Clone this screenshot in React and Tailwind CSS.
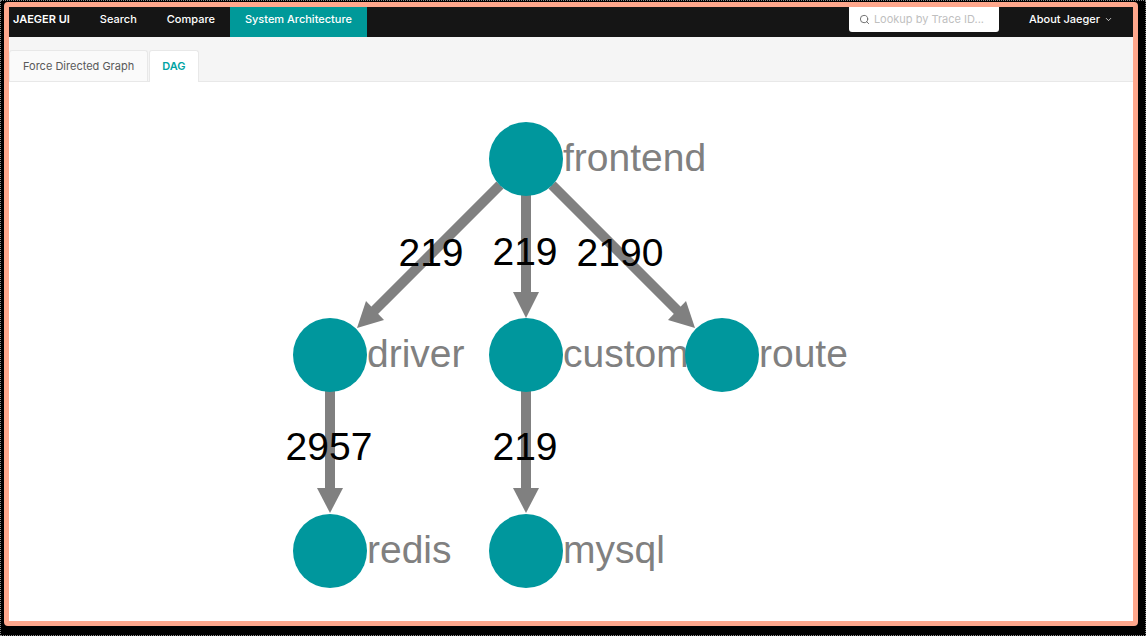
import { Search, ChevronDown } from "lucide-react";

const NODES = [
  { name: "frontend", x: 517, y: 77 },
  { name: "driver", x: 321, y: 273 },
  { name: "customer", x: 517, y: 273 },
  { name: "route", x: 713, y: 273 },
  { name: "redis", x: 321, y: 469 },
  { name: "mysql", x: 517, y: 469 },
];

const EDGES = [
  { x1: 491, y1: 103, x2: 365, y2: 229, tip: "348,246 357,219 375,238", label: "219", lx: 422, ly: 184 },
  { x1: 517, y1: 110, x2: 517, y2: 212, tip: "517,236 504,210 530,210", label: "219", lx: 516, ly: 183 },
  { x1: 543, y1: 103, x2: 669, y2: 229, tip: "686,246 677,219 659,238", label: "2190", lx: 611, ly: 184 },
  { x1: 321, y1: 305, x2: 321, y2: 408, tip: "321,431 308,406 334,406", label: "2957", lx: 320, ly: 378 },
  { x1: 517, y1: 305, x2: 517, y2: 408, tip: "517,431 504,406 530,406", label: "219", lx: 516, ly: 378 },
];

function Graph() {
  return (
    <svg viewBox="0 0 1124 539" className="block h-auto w-full" role="img" aria-label="Service dependencies">
      {EDGES.map((e) => (
        <g key={e.tip}>
          <line x1={e.x1} y1={e.y1} x2={e.x2} y2={e.y2} stroke="#808080" strokeWidth="10" />
          <polygon points={e.tip} fill="#808080" />
        </g>
      ))}
      {NODES.map((n) => (
        <g key={n.name}>
          <circle cx={n.x} cy={n.y} r="37" fill="#00979d" />
          <text x={n.x + 37} y={n.y + 12} className="fill-[#808080] font-['Liberation_Sans',sans-serif] text-[39px]">
            {n.name}
          </text>
        </g>
      ))}
      {EDGES.map((e) => (
        <text
          key={e.tip}
          x={e.lx}
          y={e.ly}
          textAnchor="middle"
          className="fill-black font-['Liberation_Sans',sans-serif] text-[39px]"
        >
          {e.label}
        </text>
      ))}
    </svg>
  );
}

export default function App() {
  return (
    <div className="flex min-h-screen border border-dotted border-[#8a8a8a] bg-black pt-px pr-[7px] pb-[9px] pl-[3px] font-['Inter',sans-serif] text-[11px]">
      <div className="flex min-w-0 flex-1 flex-col rounded-sm border-5 border-[#ffa78c] bg-white">
        <header className="flex h-[30px] items-start bg-[#151515] font-medium text-white">
          <nav className="flex h-full leading-6">
            <a href="#home" className="pr-[15px] pl-1 font-semibold">JAEGER UI</a>
            <a href="#search" className="px-[15px]">Search</a>
            <a href="#compare" className="px-[15px]">Compare</a>
            <a href="#architecture" aria-current="page" className="bg-[#009999] px-[15px]">System Architecture</a>
          </nav>
          <label className="ml-auto flex h-[25px] w-[150px] items-center gap-1 rounded-b-[3px] bg-white px-2.5 text-[#666]">
            <Search size={11} strokeWidth={2} className="shrink-0" />
            <input
              type="text"
              aria-label="Lookup by Trace ID"
              placeholder="Lookup by Trace ID..."
              className="w-full min-w-0 bg-transparent font-normal outline-none placeholder:text-[#bfbfbf]"
            />
          </label>
          <button type="button" className="mr-5 ml-[30px] flex items-center gap-1 leading-6">
            About Jaeger
            <ChevronDown size={9} />
          </button>
        </header>
        <div role="tablist" className="flex h-[45px] items-end gap-px border-b border-[#e8e8e8] bg-[#f5f5f5]">
          <button
            type="button"
            role="tab"
            aria-selected="false"
            className="h-[31px] rounded-t-[3px] border border-b-0 border-[#e8e8e8] bg-[#fafafa] px-[13px] text-[#595959]"
          >
            Force Directed Graph
          </button>
          <button
            type="button"
            role="tab"
            aria-selected="true"
            className="-mb-px h-8 rounded-t-[3px] border border-b-0 border-[#e8e8e8] bg-white px-3 font-semibold text-[#00a3a3]"
          >
            DAG
          </button>
        </div>
        <main className="flex-1">
          <Graph />
        </main>
      </div>
    </div>
  );
}
